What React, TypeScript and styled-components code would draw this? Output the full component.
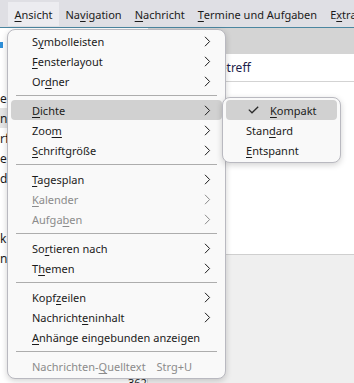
import styled, { createGlobalStyle } from "styled-components";

type Entry =
  | { kind: "item"; label: string; sub?: boolean; disabled?: boolean; active?: boolean; shortcut?: string }
  | { kind: "sep" };

const viewMenu: Entry[] = [
  { kind: "item", label: "S&ymbolleisten", sub: true },
  { kind: "item", label: "&Fensterlayout", sub: true },
  { kind: "item", label: "Or&dner", sub: true },
  { kind: "sep" },
  { kind: "item", label: "&Dichte", sub: true, active: true },
  { kind: "item", label: "Zoo&m", sub: true },
  { kind: "item", label: "&Schriftgröße", sub: true },
  { kind: "sep" },
  { kind: "item", label: "&Tagesplan", sub: true },
  { kind: "item", label: "&Kalender", sub: true, disabled: true },
  { kind: "item", label: "Aufga&ben", sub: true, disabled: true },
  { kind: "sep" },
  { kind: "item", label: "So&rtieren nach", sub: true },
  { kind: "item", label: "T&hemen", sub: true },
  { kind: "sep" },
  { kind: "item", label: "Kopf&zeilen", sub: true },
  { kind: "item", label: "Nachricht&eninhalt", sub: true },
  { kind: "item", label: "&Anhänge eingebunden anzeigen" },
  { kind: "sep" },
  { kind: "item", label: "Nachrichten-&Quelltext", disabled: true, shortcut: "Strg+U" },
];

const density = [
  { label: "&Kompakt", checked: true },
  { label: "Stan&dard", checked: false },
  { label: "&Entspannt", checked: false },
];

const menuBar = ["&Ansicht", "Na&vigation", "&Nachricht", "&Termine und Aufgaben", "E&xtras"];

// right edges of the message subjects peeking out left of the menu
const listRows = ["", "", "e", "ng", "rf", "e", "de", "", "", "k", "n"];

function Accel({ text }: { text: string }) {
  const i = text.indexOf("&");
  if (i < 0) return <>{text}</>;
  return (
    <>
      {text.slice(0, i)}
      <u>{text[i + 1]}</u>
      {text.slice(i + 2)}
    </>
  );
}

function Chevron() {
  return (
    <svg width="7" height="11" viewBox="0 0 7 11">
      <path d="M1 0.8 L5.6 5.5 L1 10.2" fill="none" stroke="currentColor" strokeWidth="1" />
    </svg>
  );
}

function Check() {
  return (
    <svg width="11" height="8" viewBox="0 0 11 8">
      <path d="M0.8 3.6 L4 6.8 L10.2 0.8" fill="none" stroke="#2b2b2b" strokeWidth="1.3" />
    </svg>
  );
}

export default function App() {
  return (
    <Screen>
      <GlobalStyle />
      <MenuBar>
        {menuBar.map((m, i) => (
          <BarItem key={m} $open={i === 0}>
            <Accel text={m} />
          </BarItem>
        ))}
      </MenuBar>
      <Workspace>
        <FolderPane>
          <FolderIcon />
          {listRows.map((r, i) => (
            <ListRow key={i} $selected={i === 3}>
              {r}
            </ListRow>
          ))}
          <PaneFooter>
            <Counter>362</Counter>
            <Thumb />
          </PaneFooter>
        </FolderPane>
        <MessagePane>
          <ColumnHeader />
          <SubjectRow>Betreff</SubjectRow>
          <ListBody />
          <PreviewArea />
        </MessagePane>
      </Workspace>

      <Menu>
        {viewMenu.map((e, i) =>
          e.kind === "sep" ? (
            <Separator key={i} />
          ) : (
            <MenuItem key={i} $active={e.active} $disabled={e.disabled}>
              <Label>
                <Accel text={e.label} />
              </Label>
              {e.shortcut && <Shortcut>{e.shortcut}</Shortcut>}
              {e.sub && <Chevron />}
            </MenuItem>
          )
        )}
      </Menu>

      <SubMenu>
        {density.map((d) => (
          <SubItem key={d.label} $active={d.checked}>
            {d.checked && <Check />}
            <SubLabel $checked={d.checked}>
              <Accel text={d.label} />
            </SubLabel>
          </SubItem>
        ))}
      </SubMenu>
    </Screen>
  );
}

const GlobalStyle = createGlobalStyle`
  html, body {
    margin: 0;
    padding: 0;
    background: #ffffff;
  }
  u {
    text-decoration: underline;
    text-decoration-thickness: 1px;
    text-underline-offset: 2px;
  }
`;

const Screen = styled.div`
  position: relative;
  width: 354px;
  height: 383px;
  overflow: hidden;
  display: flex;
  flex-direction: column;
  font-family: "Noto Sans", "Open Sans", sans-serif;
  font-size: 11px;
  color: #1b1b1b;
`;

const MenuBar = styled.div`
  height: 28px;
  flex: none;
  display: flex;
  align-items: flex-end;
  padding: 0 0 1px 8px;
  box-sizing: border-box;
  background: #dfdfe4;
  border-bottom: 1px solid #4b86a0;
  white-space: nowrap;
  overflow: hidden;
`;

const BarItem = styled.div<{ $open?: boolean }>`
  height: 24px;
  flex: none;
  display: flex;
  align-items: center;
  padding: 0 6.5px;
  background: ${(p) => (p.$open ? "#ececf0" : "transparent")};
`;

const Workspace = styled.div`
  flex: 1;
  display: flex;
  min-height: 0;
`;

const FolderPane = styled.div`
  width: 148px;
  flex: none;
  display: flex;
  flex-direction: column;
  padding-top: 14px;
  background: #ffffff;
  overflow: hidden;
`;

const FolderIcon = styled.div`
  width: 3px;
  height: 6px;
  background: #2f8fd8;
`;

const ListRow = styled.div<{ $selected?: boolean }>`
  height: 20px;
  flex: none;
  display: flex;
  align-items: center;
  font-size: 12px;
  background: ${(p) => (p.$selected ? "#e4e4e4" : "transparent")};
`;

const PaneFooter = styled.div`
  margin-top: auto;
  height: 6px;
  display: flex;
  align-items: flex-start;
  padding-left: 128px;
  overflow: hidden;
`;

const Counter = styled.span`
  font-size: 11px;
  line-height: 11px;
`;

const Thumb = styled.div`
  width: 17px;
  height: 6px;
  margin-left: auto;
  background: #d6d6d6;
`;

const MessagePane = styled.div`
  flex: 1;
  display: flex;
  flex-direction: column;
`;

const ColumnHeader = styled.div`
  height: 26px;
  background: #d4d4d4;
`;

const SubjectRow = styled.div`
  height: 27px;
  display: flex;
  align-items: center;
  padding-left: 64px;
  font-size: 12px;
  color: #1d1d4a;
  border-bottom: 1px solid #d3d3d3;
`;

const ListBody = styled.div`
  height: 172px;
  background: #ffffff;
  border-bottom: 1px solid #cfcfcf;
`;

const PreviewArea = styled.div`
  flex: 1;
  background: #efefef;
`;

const Menu = styled.div`
  position: absolute;
  left: 7px;
  top: 29px;
  width: 217px;
  padding: 1px 0 2px;
  background: #f9f9f9;
  border: 1px solid #b9b9c0;
  border-radius: 8px;
  box-shadow: 0 2px 6px rgba(0, 0, 0, 0.18);
`;

const MenuItem = styled.div<{ $active?: boolean; $disabled?: boolean }>`
  height: 20px;
  margin: 0 3px;
  padding: 0 11px 0 21px;
  display: flex;
  align-items: center;
  border-radius: 4px;
  white-space: nowrap;
  background: ${(p) => (p.$active ? "#d1d1d1" : "transparent")};
  color: ${(p) => (p.$disabled ? "#8b8b8b" : "#1b1b1b")};
`;

const Label = styled.span`
  flex: 1;
`;

const Shortcut = styled.span`
  margin-right: 19px;
`;

const Separator = styled.div`
  height: 9px;
  margin: 0 8px;
  display: flex;
  align-items: center;
  &::after {
    content: "";
    flex: 1;
    height: 1px;
    background: #adadad;
  }
`;

const SubMenu = styled.div`
  position: absolute;
  left: 222px;
  top: 97px;
  width: 117px;
  padding: 2px 0;
  background: #f9f9f9;
  border: 1px solid #b9b9c0;
  border-radius: 8px;
  box-shadow: 0 2px 6px rgba(0, 0, 0, 0.18);
`;

const SubItem = styled.div<{ $active?: boolean }>`
  height: 20px;
  margin: 0 3px;
  padding-left: ${(p) => (p.$active ? "22px" : "20px")};
  display: flex;
  align-items: center;
  border-radius: 4px;
  white-space: nowrap;
  background: ${(p) => (p.$active ? "#d1d1d1" : "transparent")};
`;

const SubLabel = styled.span<{ $checked?: boolean }>`
  margin-left: ${(p) => (p.$checked ? "11px" : "0")};
`;
